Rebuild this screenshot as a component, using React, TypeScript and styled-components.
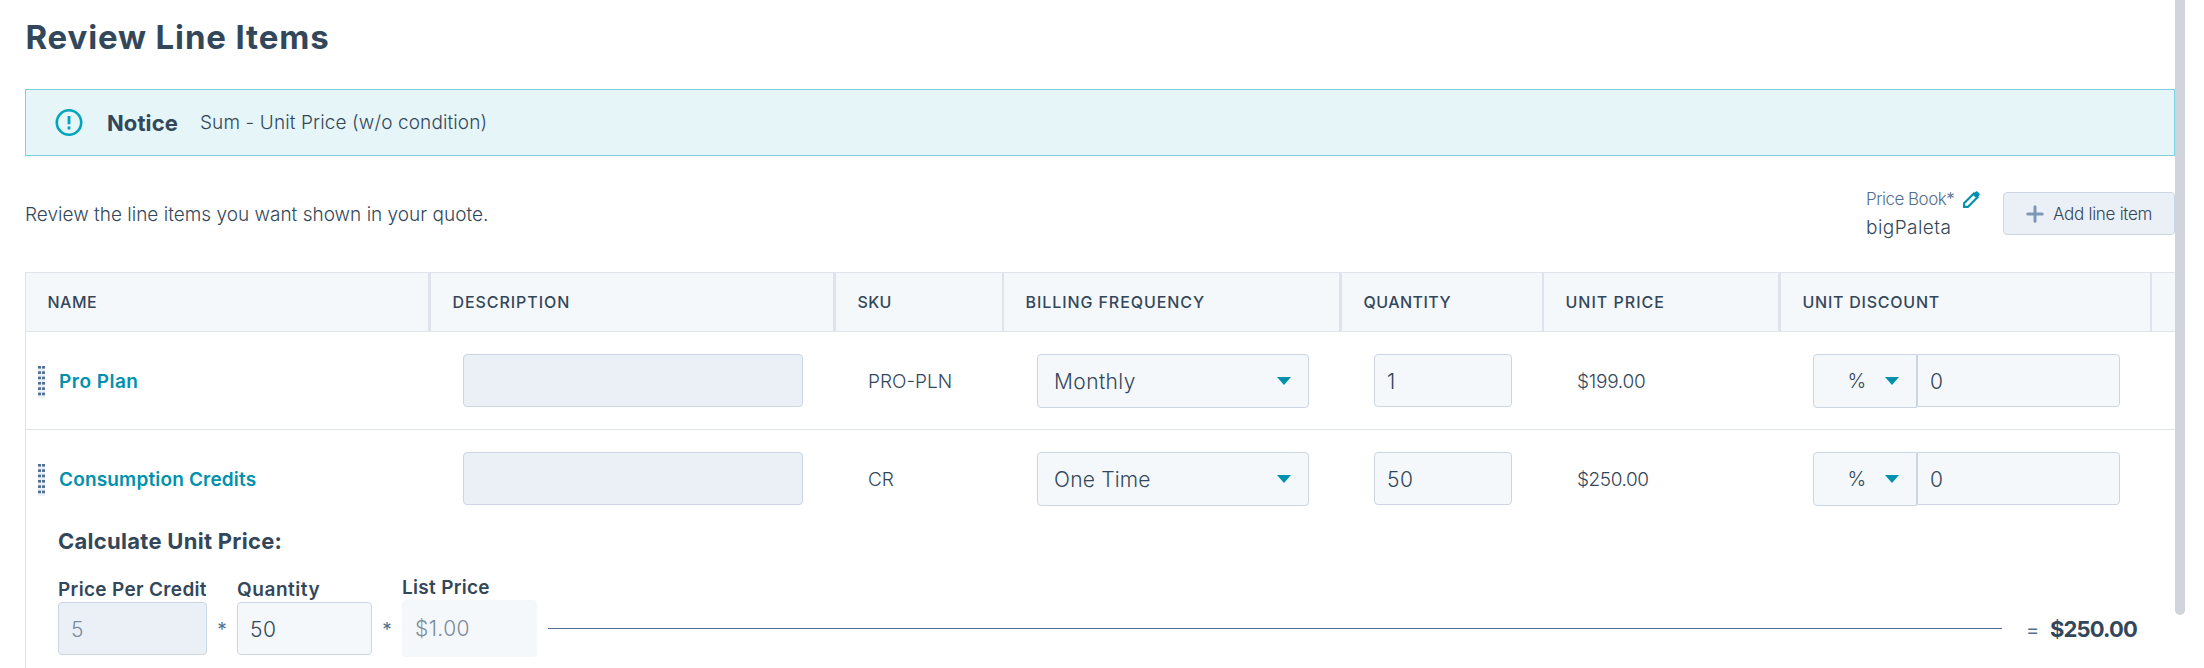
import React from 'react';
import styled, { createGlobalStyle } from 'styled-components';

const color = {
  ink: '#33475b',
  slate: '#516f90',
  link: '#0091ae',
  accent: '#00a4bd',
  line: '#dfe3eb',
  field: '#f5f8fa',
  disabled: '#eaf0f6',
  fieldBorder: '#cbd6e2',
};

const GlobalStyle = createGlobalStyle`
  *, *::before, *::after { box-sizing: border-box; }
  body {
    margin: 0;
    background: #fff;
    color: ${color.ink};
    font-family: Inter, "Liberation Sans", sans-serif;
    font-weight: 300;
    overflow: hidden;
  }
`;

const Page = styled.div`
  position: relative;
  height: 668px;
  overflow: hidden;
  padding: 0 29px 0 25px;
`;

const Title = styled.h1`
  margin: 0 0 15px;
  font-size: 33px;
  font-weight: 700;
  line-height: 75px;
  height: 74px;
  letter-spacing: 0.85px;
  text-indent: 0.5px;
`;

const Notice = styled.section`
  display: flex;
  align-items: center;
  height: 67px;
  padding-left: 29px;
  background: #e5f5f8;
  border: 1px solid #7fd1de;
`;

const NoticeTitle = styled.strong`
  margin-left: 24px;
  width: 93px;
  font-size: 22px;
  font-weight: 700;
  letter-spacing: 0.1px;
`;

const NoticeText = styled.span`
  font-size: 19px;
  letter-spacing: 0.12px;
`;

const Toolbar = styled.div`
  display: flex;
  align-items: center;
  height: 116px;
`;

const Intro = styled.p`
  flex: 1;
  margin: 0;
  font-size: 19px;
  letter-spacing: 0.01px;
`;

const PriceBook = styled.div`
  width: 137px;
  margin-bottom: 1px;
`;

const PriceBookLabel = styled.div`
  display: flex;
  align-items: center;
  justify-content: space-between;
  height: 28px;
  padding-right: 23px;
  color: ${color.slate};
  font-size: 17px;
  letter-spacing: -0.5px;
`;

const PriceBookValue = styled.div`
  font-size: 19px;
  line-height: 29px;
  letter-spacing: 0.45px;
`;

const AddButton = styled.button`
  display: flex;
  align-items: center;
  width: 172px;
  height: 43px;
  margin-bottom: 1px;
  padding: 0 0 0 22px;
  gap: 9px;
  background: ${color.disabled};
  border: 1px solid ${color.fieldBorder};
  border-radius: 4px;
  color: ${color.ink};
  font: 300 17px Inter, sans-serif;
  letter-spacing: -0.28px;
  white-space: nowrap;
`;

const Table = styled.div`
  border-top: 1px solid ${color.line};
  border-left: 1px solid ${color.line};
  height: 420px;
`;

const Columns = styled.div`
  display: grid;
  grid-template-columns: 405px 405px 168px 338px 202px 237px 371px 1fr;
`;

const HeaderRow = styled(Columns)`
  height: 59px;
  background: ${color.field};
  border-bottom: 1px solid ${color.line};
`;

const HeaderCell = styled.div<{ $rule: number; $spacing: number }>`
  display: flex;
  align-items: center;
  padding-left: 21.5px;
  border-right: ${(p) => p.$rule}px solid ${color.line};
  font-size: 16px;
  font-weight: 500;
  letter-spacing: ${(p) => p.$spacing}px;
  white-space: nowrap;
`;

const ItemRow = styled(Columns)<{ $last?: boolean }>`
  height: ${(p) => (p.$last ? 97 : 98)}px;
  border-bottom: ${(p) => (p.$last ? 0 : 1)}px solid ${color.line};
`;

const Cell = styled.div`
  display: flex;
  align-items: flex-start;
  padding: 22px 0 0 32px;
`;

const NameCell = styled(Cell)`
  align-items: center;
  padding: 2px 0 0 12px;
  gap: 14px;
`;

const ItemLink = styled.a<{ $spacing: number }>`
  color: ${color.link};
  font-size: 19px;
  font-weight: 600;
  letter-spacing: ${(p) => p.$spacing}px;
`;

const CellText = styled.span<{ $spacing: number }>`
  font-size: 19px;
  line-height: 56px;
  letter-spacing: ${(p) => p.$spacing}px;
`;

const PriceCell = styled(Cell)`
  padding-left: 33px;
`;

const Field = styled.div<{ $width: number; $variant?: 'disabled' | 'readonly' | 'joined'; $spacing?: number }>`
  width: ${(p) => p.$width}px;
  height: ${(p) => (p.$variant === 'readonly' ? 57 : 53)}px;
  padding-left: 12px;
  background: ${(p) => (p.$variant === 'disabled' ? color.disabled : color.field)};
  border: 1px solid ${(p) => (p.$variant === 'readonly' ? color.field : color.fieldBorder)};
  border-radius: ${(p) => (p.$variant === 'joined' ? '0 4px 4px 0' : '4px')};
  color: ${(p) => (p.$variant === 'disabled' || p.$variant === 'readonly' ? '#7d8b9b' : color.ink)};
  font-size: 21px;
  line-height: ${(p) => (p.$variant === 'readonly' ? 55 : 53)}px;
  letter-spacing: ${(p) => p.$spacing ?? 0.6}px;
`;

const Select = styled.div<{ $width: number; $unit?: boolean; $spacing?: number }>`
  display: flex;
  align-items: center;
  justify-content: space-between;
  width: ${(p) => p.$width}px;
  height: 54px;
  padding: ${(p) => (p.$unit ? '0 17px 0 33.5px' : '0 17px 0 16px')};
  margin-left: ${(p) => (p.$unit ? 0 : 1)}px;
  background: ${color.field};
  border: 1px solid ${color.fieldBorder};
  border-radius: ${(p) => (p.$unit ? '4px 0 0 4px' : '4px')};
  font-size: ${(p) => (p.$unit ? 20 : 21)}px;
  letter-spacing: ${(p) => p.$spacing ?? 0}px;
`;

const Calculator = styled.section`
  padding-left: 32px;
`;

const CalcTitle = styled.h2`
  margin: 0 0 19px;
  font-size: 22px;
  font-weight: 700;
  line-height: 28px;
  letter-spacing: 0.28px;
`;

const Formula = styled.div`
  display: flex;
  align-items: center;
  height: 83px;
`;

const FieldGroup = styled.div<{ $width: number }>`
  width: ${(p) => p.$width}px;
`;

const FieldLabel = styled.div<{ $spacing: number }>`
  height: 26px;
  font-size: 19px;
  font-weight: 600;
  line-height: 28px;
  letter-spacing: ${(p) => p.$spacing}px;
  white-space: nowrap;
`;

const Operator = styled.span`
  width: 30px;
  padding-top: 28px;
  color: ${color.slate};
  font-size: 19px;
  font-weight: 400;
  line-height: 26px;
  text-align: center;
`;

const Rule = styled.div`
  align-self: flex-start;
  width: 1454px;
  height: 1px;
  margin: 54px 24px 0 11px;
  background: ${color.slate};
`;

const Equals = styled.span`
  width: 24px;
  padding-top: 29px;
  color: ${color.slate};
  font-size: 20px;
  font-weight: 400;
  line-height: 26px;
`;

const Total = styled.strong`
  padding-top: 27px;
  font-size: 22px;
  font-weight: 700;
  line-height: 26px;
  letter-spacing: -0.85px;
`;

const ScrollThumb = styled.div`
  position: absolute;
  top: 0;
  left: 2175px;
  width: 10px;
  height: 615px;
  background: #d1d4dd;
  border-radius: 0 0 5px 5px;
`;

const NoticeIcon = () => (
  <svg width="28" height="28" viewBox="0 0 28 28" fill="none" stroke={color.accent}>
    <circle cx="14" cy="13.5" r="12.2" strokeWidth="2.6" />
    <path d="M14 7v8.2M14 17.6v2.8" strokeWidth="2.8" />
  </svg>
);

const PencilIcon = () => (
  <svg width="17" height="17" viewBox="0 0 17 17" fill="none" stroke={color.link}>
    <path d="M1.1 12.2 10.8 2.5 14.5 6.2 4.8 15.9H1.1z" strokeWidth="2.1" />
    <path d="M9.6 3.4 12.2.9Q13.6-.2 14.8.8L16.2 2.2Q17.2 3.4 16 4.8L13.6 7.4z" fill={color.link} stroke="none" />
  </svg>
);

const PlusIcon = () => (
  <svg width="18" height="18" viewBox="0 0 18 18" stroke="#7c98b6" strokeWidth="3" strokeLinecap="round">
    <path d="M9 1.8v14.4M1.8 9h14.4" />
  </svg>
);

const Caret = () => (
  <svg width="14" height="8" viewBox="0 0 14 8" fill={color.link}>
    <path d="M0 0h14L7 8z" />
  </svg>
);

const Grip = () => (
  <svg width="7" height="32" viewBox="0 0 7 32">
    <rect width="7" height="32" fill="#eaf0f6" />
    {[0, 1, 2, 3, 4, 5].map((i) => (
      <g key={i} fill={color.slate}>
        <rect x="0" y={i * 5.33} width="3" height="2.6" />
        <rect x="4" y={i * 5.33} width="3" height="2.6" />
      </g>
    ))}
  </svg>
);

const headers = [
  { label: 'NAME', rule: 3, spacing: 0.5 },
  { label: 'DESCRIPTION', rule: 3, spacing: 0.93 },
  { label: 'SKU', rule: 2, spacing: 0.35 },
  { label: 'BILLING FREQUENCY', rule: 3, spacing: 0.92 },
  { label: 'QUANTITY', rule: 2, spacing: 0.46 },
  { label: 'UNIT PRICE', rule: 3, spacing: 1 },
  { label: 'UNIT DISCOUNT', rule: 2, spacing: 0.76 },
  { label: '', rule: 0, spacing: 0 },
];

const items = [
  { name: 'Pro Plan', nameSpacing: 0.5, sku: 'PRO-PLN', billing: 'Monthly', billingSpacing: 0.4, quantity: '1', price: '$199.00', priceSpacing: -0.25 },
  { name: 'Consumption Credits', nameSpacing: 0.17, sku: 'CR', billing: 'One Time', billingSpacing: 0.2, quantity: '50', price: '$250.00', priceSpacing: -0.42 },
];

export default function App() {
  return (
    <Page>
      <GlobalStyle />
      <Title>Review Line Items</Title>
      <Notice>
        <NoticeIcon />
        <NoticeTitle>Notice</NoticeTitle>
        <NoticeText>Sum - Unit Price (w/o condition)</NoticeText>
      </Notice>
      <Toolbar>
        <Intro>Review the line items you want shown in your quote.</Intro>
        <PriceBook>
          <PriceBookLabel>
            Price Book*
            <PencilIcon />
          </PriceBookLabel>
          <PriceBookValue>bigPaleta</PriceBookValue>
        </PriceBook>
        <AddButton>
          <PlusIcon />
          Add line item
        </AddButton>
      </Toolbar>
      <Table>
        <HeaderRow>
          {headers.map((h, i) => (
            <HeaderCell key={i} $rule={h.rule} $spacing={h.spacing}>
              {h.label}
            </HeaderCell>
          ))}
        </HeaderRow>
        {items.map((item, i) => (
          <ItemRow key={item.name} $last={i === items.length - 1}>
            <NameCell>
              <Grip />
              <ItemLink $spacing={item.nameSpacing}>{item.name}</ItemLink>
            </NameCell>
            <Cell>
              <Field $width={340} $variant="disabled" />
            </Cell>
            <Cell>
              <CellText $spacing={0}>{item.sku}</CellText>
            </Cell>
            <Cell>
              <Select $width={272} $spacing={item.billingSpacing}>
                {item.billing}
                <Caret />
              </Select>
            </Cell>
            <Cell>
              <Field $width={138}>{item.quantity}</Field>
            </Cell>
            <PriceCell>
              <CellText $spacing={item.priceSpacing}>{item.price}</CellText>
            </PriceCell>
            <Cell>
              <Select $width={104} $unit>
                %
                <Caret />
              </Select>
              <Field $width={203} $variant="joined">0</Field>
            </Cell>
          </ItemRow>
        ))}
        <Calculator>
          <CalcTitle>Calculate Unit Price:</CalcTitle>
          <Formula>
            <FieldGroup $width={149}>
              <FieldLabel $spacing={0.33}>Price Per Credit</FieldLabel>
              <Field $width={149} $variant="disabled">5</Field>
            </FieldGroup>
            <Operator>*</Operator>
            <FieldGroup $width={135}>
              <FieldLabel $spacing={0.55}>Quantity</FieldLabel>
              <Field $width={135}>50</Field>
            </FieldGroup>
            <Operator>*</Operator>
            <FieldGroup $width={135}>
              <FieldLabel $spacing={0.3}>List Price</FieldLabel>
              <Field $width={135} $variant="readonly" $spacing={0.4}>$1.00</Field>
            </FieldGroup>
            <Rule />
            <Equals>=</Equals>
            <Total>$250.00</Total>
          </Formula>
        </Calculator>
      </Table>
      <ScrollThumb />
    </Page>
  );
}
